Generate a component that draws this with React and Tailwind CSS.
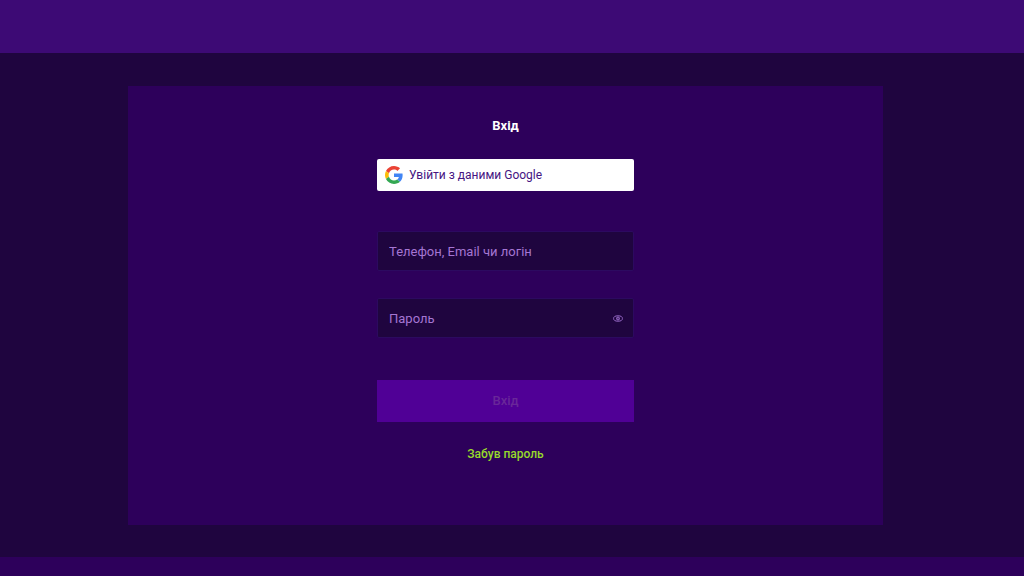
import React, { useState } from 'react';

const GoogleIcon = () => (
  <svg viewBox="0 0 48 48" className="h-[18px] w-[18px] shrink-0" aria-hidden="true">
    <path fill="#EA4335" d="M24 9.5c3.54 0 6.71 1.22 9.21 3.6l6.85-6.85C35.9 2.38 30.47 0 24 0 14.62 0 6.51 5.38 2.56 13.22l7.98 6.19C12.43 13.72 17.74 9.5 24 9.5z" />
    <path fill="#4285F4" d="M46.98 24.55c0-1.57-.15-3.09-.38-4.55H24v9.02h12.94c-.58 2.96-2.26 5.48-4.78 7.18l7.73 6c4.51-4.18 7.09-10.36 7.09-17.65z" />
    <path fill="#FBBC05" d="M10.53 28.59c-.48-1.45-.76-2.99-.76-4.59s.27-3.14.76-4.59l-7.98-6.19C.92 16.46 0 20.12 0 24c0 3.88.92 7.54 2.56 10.78l7.97-6.19z" />
    <path fill="#34A853" d="M24 48c6.48 0 11.93-2.13 15.89-5.81l-7.73-6c-2.15 1.45-4.92 2.3-8.16 2.3-6.26 0-11.57-4.22-13.47-9.91l-7.98 6.19C6.51 42.62 14.62 48 24 48z" />
  </svg>
);

const EyeIcon = () => (
  <svg viewBox="0 0 20 14" className="h-[7px] w-[10px]" fill="none" stroke="currentColor" strokeWidth="2" aria-hidden="true">
    <ellipse cx="10" cy="7" rx="8.8" ry="5.4" />
    <circle cx="10" cy="7" r="3" fill="currentColor" fillOpacity="0.5" />
  </svg>
);

const inputClass =
  'block h-10 w-full rounded-xs border border-[#2c0a60] bg-[#1f053f] pt-px pl-[11px] pr-8 text-[13px] text-[#a576d3] placeholder:text-[#a576d3] placeholder:opacity-100 focus:outline-none focus:border-[#5a12a8]';

const App = () => {
  const [login, setLogin] = useState('');
  const [password, setPassword] = useState('');
  const [showPassword, setShowPassword] = useState(false);

  return (
    <div className="flex min-h-screen flex-col bg-[#2d005b] font-['Roboto',sans-serif] text-white">
      <header className="h-[53px] bg-[#3d0a75]" />

      <main className="flex flex-1 flex-col bg-[#1f053f] pt-[33px] pb-8 pl-32 pr-[141px]">
        <section className="flex flex-1 flex-col items-center bg-[#2d005b] pt-[30px] pb-[60px]">
          <form className="flex w-[257px] flex-col items-center" onSubmit={(e) => e.preventDefault()}>
            <h1 className="text-[13px] leading-5 font-bold">Вхід</h1>

            <button
              type="button"
              className="mt-[23px] flex h-8 w-full items-center gap-[6px] rounded-xs bg-white px-2 text-xs text-[#461482]"
            >
              <GoogleIcon />
              Увійти з даними Google
            </button>

            <input
              type="text"
              aria-label="Телефон, Email чи логін"
              placeholder="Телефон, Email чи логін"
              value={login}
              onChange={(e) => setLogin(e.target.value)}
              className={`mt-10 ${inputClass}`}
            />

            {/* Password with visibility toggle */}
            <div className="relative mt-[27px] w-full">
              <input
                type={showPassword ? 'text' : 'password'}
                aria-label="Пароль"
                placeholder="Пароль"
                value={password}
                onChange={(e) => setPassword(e.target.value)}
                className={inputClass}
              />
              <button
                type="button"
                aria-label="Показати пароль"
                onClick={() => setShowPassword(!showPassword)}
                className="absolute inset-y-0 right-0 flex w-8 items-center justify-center text-[#9468c4]"
              >
                <EyeIcon />
              </button>
            </div>

            <button
              type="submit"
              disabled={!login || !password}
              className="mt-[42px] h-[42px] w-full bg-[#500096] text-[13px] font-medium text-white disabled:text-[#692799]"
            >
              Вхід
            </button>

            <a href="#" className="mt-[22px] text-xs leading-5 font-medium text-[#97d92b]">
              Забув пароль
            </a>
          </form>
        </section>
      </main>

      <footer className="h-[19px] bg-[#2d005b]" />
    </div>
  );
};

export default App;
